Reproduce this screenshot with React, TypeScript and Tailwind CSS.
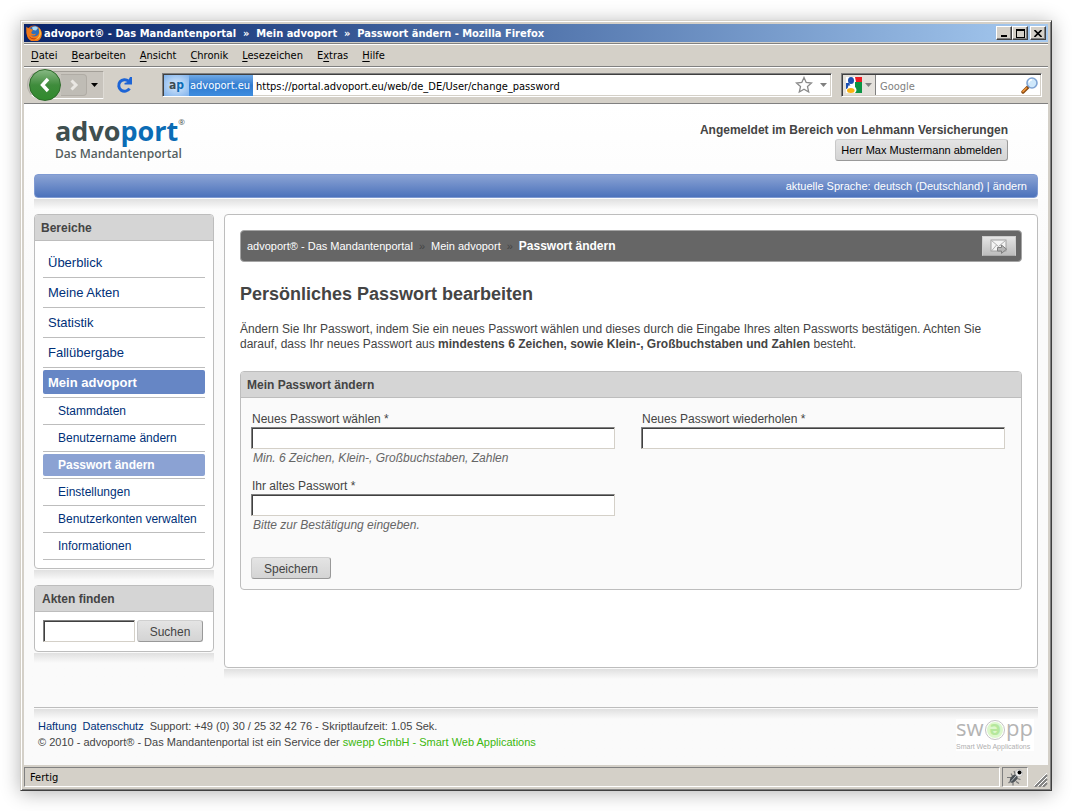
import React from 'react';

const menuItems = [
  { before: '', key: 'D', after: 'atei' },
  { before: '', key: 'B', after: 'earbeiten' },
  { before: '', key: 'A', after: 'nsicht' },
  { before: '', key: 'C', after: 'hronik' },
  { before: '', key: 'L', after: 'esezeichen' },
  { before: 'E', key: 'x', after: 'tras' },
  { before: '', key: 'H', after: 'ilfe' }
];

const areas = ['Überblick', 'Meine Akten', 'Statistik', 'Fallübergabe', 'Mein advoport'];

const subAreas = [
  'Stammdaten',
  'Benutzername ändern',
  'Passwort ändern',
  'Einstellungen',
  'Benutzerkonten verwalten',
  'Informationen'
];

const FirefoxIcon: React.FC = () => (
  <svg width="16" height="16" viewBox="0 0 16 16" className="shrink-0">
    <circle cx="8" cy="8" r="7.500" fill="#e0560f" />
    <circle cx="8.500" cy="6.500" r="5.500" fill="#2f6fb8" />
    <path d="M6 2.500c2-1.500 5-1 6 .5L10 5.500 7 5z" fill="#a9d8f4" />
    <path d="M.5 1.500C1.500 3 2.500 3 4 3.500c1 .5 2 1 3 1L6 6.500c-1 .5-1 2 .5 2.500s2-.5 3.500-.3c-1 2-3.500 2.300-5 1.300 1.500 2.500 7 2 8-2 .3-2-.2-4-1-5.500 2.500 1 3.800 3.500 3.800 6A7.400 7.400 0 0 1 1 10C.2 7 0 4 .5 1.500z" fill="#f07a1a" />
    <path d="M12.500 3c1.800 1.500 2.700 4 2.300 6.500-.6 3-3 5-6 5.300 3-1.300 4.700-3.300 4.800-6.300 0-2-.4-4-1.100-5.500z" fill="#fdc944" />
    <path d="M3 11c2 2.500 5 3 7.500 2-2 2.200-6 1.500-7.500-2z" fill="#b83208" />
  </svg>
);

const ReloadIcon: React.FC = () => (
  <svg width="18" height="18" viewBox="0 0 18 18">
    <path d="M13.500 5.200A5.800 5.800 0 1 0 14.500 12.500" fill="none" stroke="#1c64d6" strokeWidth="3" />
    <path d="M17 1v7.500H9.500V7l3-1 2.500-5z" fill="#1c64d6" />
  </svg>
);

const GoogleIcon: React.FC = () => (
  <svg width="16" height="16" viewBox="0 0 16 16">
    <rect width="16" height="16" fill="#fff" />
    <path d="M9 0h7v5h-6z" fill="#ee1c23" />
    <path d="M9 5h7v11H9c2-2 2-4 0-6z" fill="#0b9444" />
    <path d="M0 6h3l2 4-5 2z" fill="#1c4fb0" />
    <ellipse cx="5" cy="3.500" rx="3" ry="3.500" fill="#1c4fb0" />
    <path d="M2.500 8.500h4.500c2 .8 3 2.500 2 4.500H1z" fill="#fff" />
    <ellipse cx="4.800" cy="13.500" rx="3.800" ry="2.500" fill="#f9b310" />
  </svg>
);

const MagnifierIcon: React.FC = () => (
  <svg width="18" height="17" viewBox="0 0 18 17">
    <path d="M7.500 9.500 2 15" stroke="#8a4a10" strokeWidth="3.400" strokeLinecap="round" />
    <path d="M5.500 11 2 14.400" stroke="#f0963c" strokeWidth="1.600" strokeLinecap="round" />
    <circle cx="11" cy="6" r="5" fill="#cfe8fb" stroke="#7fa4d4" strokeWidth="1.600" />
    <path d="M8 5.500a3 3 0 0 1 3-2.700" stroke="#fff" strokeWidth="1.500" fill="none" />
  </svg>
);

const MailIcon: React.FC = () => (
  <svg width="18" height="15" viewBox="0 0 18 15">
    <rect x="1" y="1" width="15" height="11" fill="#f4f4f4" stroke="#a0a0a0" />
    <path d="m1.500 1.500 7 6 7-6M1.500 12l5-6M15.500 12l-5-6" fill="none" stroke="#b0b0b0" />
    <path d="M7.500 8.500h4V6l5 4.200-5 4.200V12h-4z" fill="#b5b5b5" stroke="#808080" />
  </svg>
);

const BugIcon: React.FC = () => (
  <svg width="16" height="17" viewBox="0 0 16 17">
    <path d="M0 8.500h4M1.500 14l3-2.500M6 16.500V13M4 4.500 6 8M9 12.500l3 2M10 9.500l3.500 1M7 2l1.500 4" stroke="#777" strokeWidth="1.200" />
    <ellipse cx="6.800" cy="9.500" rx="3" ry="5" transform="rotate(42 6.800 9.500)" fill="#4d5358" />
    <path d="m4 12.500 5-5.500" stroke="#b9c0c5" />
    <circle cx="12" cy="4" r="3.600" fill="#f2f2f2" stroke="#aaa" strokeWidth=".6" />
    <circle cx="12.500" cy="3.500" r="2" fill="#000" />
  </svg>
);

const SweppLogo: React.FC = () => (
  <svg width="78" height="32" viewBox="0 0 78 32" className="bg-white font-['Open_Sans',sans-serif]">
    <text x="0" y="17" fontSize="22" fill="#b4b4b4">sw</text>
    <circle cx="39" cy="11" r="9.500" fill="#fff" stroke="#c4c4c4" />
    <circle cx="39" cy="11" r="8" fill="#dcf7cc" />
    <text x="39" y="16" fontSize="19" fontWeight="700" textAnchor="middle" fill="#b5e79c">ə</text>
    <text x="50" y="17" fontSize="22" fill="#b4b4b4">pp</text>
    <text x="0" y="30" fontSize="7" fill="#b0b0b0" className="font-['Liberation_Sans',sans-serif]">Smart Web Applications</text>
  </svg>
);

const Caret: React.FC<{ className?: string }> = ({ className = 'text-black' }) => (
  <svg width="7" height="4" viewBox="0 0 7 4" className={className}>
    <path d="M0 0h7L3.500 4z" fill="currentColor" />
  </svg>
);

const frameButton =
  'flex h-[14px] w-4 items-center justify-center border border-t-white border-l-white border-r-[#404040] border-b-[#404040] bg-[#d4d0c8] shadow-[inset_-1px_-1px_0_#808080]';

const sunken =
  'border border-t-[#808080] border-l-[#808080] border-r-white border-b-white shadow-[inset_1px_1px_0_#404040,inset_-1px_-1px_0_#d4d0c8]';

const pageInput =
  'h-[22px] border border-t-[#808080] border-l-[#808080] border-r-[#d4d0c8] border-b-[#d4d0c8] bg-white px-1 shadow-[inset_1px_1px_0_#404040] outline-none';

const pageButton =
  'h-[22px] rounded-[3px] border border-t-[#d0d0d0] border-l-[#c8c8c8] border-r-[#999] border-b-[#999] bg-linear-to-b from-[#e4e4e4] to-[#d4d4d4]';

const TitleBar: React.FC = () => (
  <div className="flex h-[18px] items-center bg-linear-to-r from-[#0a246a] to-[#a6caf0] pr-0.5 pl-0.5">
    <FirefoxIcon />
    <span className="ml-0.5 flex-1 whitespace-pre text-[11px] leading-none font-bold text-white">
      {'advoport® - Das Mandantenportal  »  Mein advoport  »  Passwort ändern - Mozilla Firefox'}
    </span>
    <button aria-label="Minimieren" className={frameButton}>
      <svg width="8" height="8" viewBox="0 0 8 8"><path d="M1 6h6v2H1z" /></svg>
    </button>
    <button aria-label="Maximieren" className={frameButton}>
      <svg width="9" height="9" viewBox="0 0 9 9"><path d="M0 0h9v9H0zM1 2v6h7V2z" fillRule="evenodd" /></svg>
    </button>
    <button aria-label="Schließen" className={`ml-0.5 ${frameButton}`}>
      <svg width="8" height="7" viewBox="0 0 8 7"><path d="m.5 0 7 7M7.500 0l-7 7" stroke="#000" strokeWidth="1.600" /></svg>
    </button>
  </div>
);

const MenuBar: React.FC = () => (
  <nav className="mt-px flex h-[24px] items-center gap-[14px] border-t border-b border-[#808080] pt-0.5 pl-[7px] text-[11px] shadow-[inset_0_1px_0_#fff,0_1px_0_#fff]">
    {menuItems.map((item) => (
      <button key={item.key}>
        {item.before}
        <span className="underline underline-offset-2">{item.key}</span>
        {item.after}
      </button>
    ))}
  </nav>
);

const Toolbar: React.FC = () => (
  <div className="flex h-[37px] items-center border-b border-[#808080] pr-1.5 pl-[3px] text-[11px]">
    <div className="flex h-7 w-[77px] shrink-0 items-center rounded-l-full rounded-r-xl border border-t-[#a39f98] border-l-[#b5b1aa] border-r-[#dedbd5] border-b-white bg-[#c8c4bd]">
      <button
        aria-label="Zurück"
        className="-my-1 ml-px flex size-8 shrink-0 items-center justify-center rounded-full border border-[#2d6b2a] bg-linear-to-b from-[#86b883] via-[#3f8c3c] to-[#2f8a2c]"
      >
        <svg width="12" height="16" viewBox="0 0 12 16"><path d="M9 2 3.500 8 9 14" fill="none" stroke="#fff" strokeWidth="3.400" /></svg>
      </button>
      <button aria-label="Vor" className="flex h-[22px] w-[26px] items-center justify-center rounded-r border border-l-0 border-[#b0aca5] bg-[#bfbcb5]">
        <svg width="10" height="12" viewBox="0 0 10 12"><path d="m2.500 1.500 4.500 4.500-4.500 4.500" fill="none" stroke="#e9e7e3" strokeWidth="3" /></svg>
      </button>
      <button aria-label="Verlauf" className="ml-1">
        <Caret />
      </button>
    </div>
    <button aria-label="Neu laden" className="ml-[11px]">
      <ReloadIcon />
    </button>
    <div className={`ml-[29px] flex h-6 flex-1 items-center bg-white p-px ${sunken}`}>
      <button className="flex h-[21px] shrink-0 items-center bg-linear-to-b from-[#6fa9e6] via-[#2f7bd0] to-[#3f8ddf] text-white">
        <span className="flex h-full w-[25px] items-center justify-center bg-radial from-[#dcebfb] to-[#7fb2ec] text-[12px] font-bold text-[#3f4b4f]">
          a<span className="text-[#0b6cb5]">p</span>
        </span>
        <span className="pt-0.5 pr-[3px] pl-px">advoport.eu</span>
      </button>
      <input aria-label="Adresse" className="h-5 min-w-0 flex-1 px-[3px] pt-0.5 text-black outline-none" defaultValue="https://portal.advoport.eu/web/de_DE/User/change_password" />
      <button aria-label="Lesezeichen hinzufügen" className="mr-[7px]">
        <svg width="18" height="18" viewBox="0 0 18 18">
          <path d="m9 1.500 2.200 5 5.300.5-4 3.600 1.200 5.400L9 13.200 4.300 16l1.200-5.400-4-3.600 5.300-.5z" fill="#fff" stroke="#8a8a8a" strokeWidth="1.300" />
        </svg>
      </button>
      <button aria-label="Adressverlauf" className="mr-[3px]">
        <Caret className="text-[#808080]" />
      </button>
    </div>
    <div className={`ml-[9px] flex h-6 w-[201px] shrink-0 items-center bg-white p-px ${sunken}`}>
      <button aria-label="Suchmaschine" className="flex h-full w-[33px] items-center gap-[3px] border-r border-[#808080] bg-[#e4e1dc] pl-[3px]">
        <GoogleIcon />
        <Caret className="text-[#808080]" />
      </button>
      <input aria-label="Suche" className="h-5 min-w-0 flex-1 px-1 pt-0.5 outline-none placeholder:text-[#808080]" placeholder="Google" />
      <button aria-label="Suchen" className="mr-px">
        <MagnifierIcon />
      </button>
    </div>
  </div>
);

const Fade: React.FC = () => <div className="mt-px h-2.5 bg-linear-to-b from-[#e0e0e0] to-[#fafafa]" />;

const Sidebar: React.FC = () => (
  <aside className="w-[180px] shrink-0">
    <section className="rounded-[4px] border border-[#bdbdbd] bg-white">
      <h2 className="h-[26px] rounded-t-[3px] border-b border-[#bdbdbd] bg-[#d5d5d5] pl-1.5 text-[12px] leading-[26px] font-bold">Bereiche</h2>
      <ul className="px-2 pt-[7px] pb-2 text-[#003078]">
        {areas.map((name) => {
          const active = name === 'Mein advoport';
          return (
            <li key={name} className="h-[30px] border-b border-[#bdbdbd] pt-0.5 text-[13px]">
              <a
                href="#"
                className={`block h-6 rounded-[2px] pl-[5px] leading-[26px] ${active ? 'bg-[#6686c5] font-bold text-white' : ''}`}
              >
                {name}
              </a>
            </li>
          );
        })}
        {subAreas.map((name) => {
          const active = name === 'Passwort ändern';
          return (
            <li key={name} className="h-[27px] border-b border-[#bdbdbd] pt-0.5 text-[12px]">
              <a
                href="#"
                className={`block h-[22px] rounded-[2px] pl-[15px] leading-[22px] whitespace-nowrap ${active ? 'bg-[#8ba2d3] font-bold text-white' : ''}`}
              >
                {name}
              </a>
            </li>
          );
        })}
      </ul>
    </section>
    <Fade />
    <section className="mt-[5px] rounded-[4px] border border-[#bdbdbd] bg-white">
      <h2 className="h-[26px] rounded-t-[3px] border-b border-[#bdbdbd] bg-[#d5d5d5] pl-[7px] text-[12px] leading-[26px] font-bold">
        <label htmlFor="find">Akten finden</label>
      </h2>
      <form className="flex gap-0.5 px-2 pt-2 pb-[9px]" onSubmit={(e) => e.preventDefault()}>
        <input id="find" className={`w-[92px] ${pageInput}`} />
        <button className={`w-[66px] pt-px text-[12px] ${pageButton}`}>Suchen</button>
      </form>
    </section>
    <Fade />
  </aside>
);

const Field: React.FC<{ id: string; label: string; hint?: string }> = ({ id, label, hint }) => (
  <div className="flex h-[67px] flex-col pr-4 pl-2.5">
    <label htmlFor={id} className="h-[17px] pl-px leading-[19px]">{label}</label>
    <input id={id} type="password" className={pageInput} />
    {hint && <p className="pt-px pl-0.5 leading-4 text-[#666] italic">{hint}</p>}
  </div>
);

const Content: React.FC = () => (
  <main className="min-w-0 flex-1">
    <div className="rounded-[4px] border border-[#bdbdbd] bg-white px-[15px] pt-[15px] pb-[77px]">
      <div className="flex h-8 items-center rounded-[4px] border border-[#a5a5a5] bg-[#666] pr-[5px] pl-1.5 text-[11px] text-white">
        <a href="#">advoport® - Das Mandantenportal</a>
        <span className="mx-1.5 text-[#444]">»</span>
        <a href="#">Mein advoport</a>
        <span className="mx-1.5 text-[#444]">»</span>
        <strong className="flex-1 text-[12px]">Passwort ändern</strong>
        <button aria-label="Nachricht senden" className="flex h-5 w-[34px] items-center justify-center border border-[#ccc] border-b-[#aaa] bg-linear-to-b from-[#e4e4e4] to-[#bdbdbd]">
          <MailIcon />
        </button>
      </div>
      <h1 className="mt-5 text-[18px] leading-6 font-bold">Persönliches Passwort bearbeiten</h1>
      <p className="mt-4 pr-3 text-[12px] leading-[15px]">
        Ändern Sie Ihr Passwort, indem Sie ein neues Passwort wählen und dieses durch die Eingabe Ihres alten Passworts bestätigen. Achten Sie
        darauf, dass Ihr neues Passwort aus <strong>mindestens 6 Zeichen, sowie Klein-, Großbuchstaben und Zahlen</strong> besteht.
      </p>
      <form className="mt-[19px] rounded-[4px] border border-[#bdbdbd] bg-[#fafafa] text-[12px]" onSubmit={(e) => e.preventDefault()}>
        <h2 className="h-[26px] rounded-t-[3px] border-b border-[#bdbdbd] bg-[#d5d5d5] pl-1.5 leading-[26px] font-bold">Mein Passwort ändern</h2>
        <div className="grid grid-cols-2 pt-3">
          <Field id="new-password" label="Neues Passwort wählen *" hint="Min. 6 Zeichen, Klein-, Großbuchstaben, Zahlen" />
          <Field id="repeat-password" label="Neues Passwort wiederholen *" />
          <Field id="old-password" label="Ihr altes Passwort *" hint="Bitte zur Bestätigung eingeben." />
        </div>
        <button className={`mt-[13px] mb-2.5 ml-2.5 block w-20 pt-px ${pageButton}`}>Speichern</button>
      </form>
    </div>
    <Fade />
  </main>
);

const App: React.FC = () => (
  <div className="flex min-h-screen bg-white p-5 font-['DejaVu_Sans_Condensed','DejaVu_Sans',sans-serif] text-black">
    <div className="flex min-w-0 flex-1 flex-col border border-t-[#d4d0c8] border-l-[#d4d0c8] border-r-[#404040] border-b-[#404040] bg-[#d4d0c8] p-[3px] shadow-[inset_1px_1px_0_#fff,inset_-1px_-1px_0_#808080,0_2px_18px_rgba(0,0,0,0.3)]">
      <TitleBar />
      <MenuBar />
      <Toolbar />
      <div className="flex flex-1 flex-col bg-[#fafafa] bg-linear-to-b from-white to-[#fafafa] to-25% px-2.5 font-['Liberation_Sans',Arial,sans-serif] text-[#444]">
        <header className="flex h-[70px] justify-between pr-[30px] pl-[21px]">
          <div className="pt-3 font-['Open_Sans',sans-serif]">
            <a href="#" className="flex items-start text-[27px] leading-[30px] font-bold text-[#3f4f4f]">
              advo<span className="text-[#0b6cb5]">port</span>
              <span className="text-[8px] leading-3 font-normal">®</span>
            </a>
            <p className="text-[12px] leading-4 font-semibold text-[#555f5f]">Das Mandantenportal</p>
          </div>
          <div className="flex flex-col items-end pt-[18px]">
            <p className="text-[12px] leading-4 font-bold">Angemeldet im Bereich von Lehmann Versicherungen</p>
            <button className={`mt-px px-[5px] text-[11px] text-black ${pageButton}`}>Herr Max Mustermann abmelden</button>
          </div>
        </header>
        <div className="h-6 rounded-[4px] border border-[#7f9ad2] bg-linear-to-b from-[#8ba3d4] to-[#4c72bb] pr-2.5 text-right text-[11px] leading-[22px] text-white">
          aktuelle Sprache: deutsch (Deutschland) | <a href="#">ändern</a>
        </div>
        <div className="mt-px h-2.5 bg-linear-to-b from-[#e0e0e0] to-[#fbfbfb]" />
        <div className="mt-[5px] flex gap-2.5">
          <Sidebar />
          <Content />
        </div>
        <footer className="mt-7 flex-1 border-t border-[#bdbdbd]">
          <Fade />
          <div className="flex justify-between pr-1 pl-1 text-[11px]">
            <div className="leading-[15px]">
              <p>
                <a href="#" className="mr-1.5 text-[#003078]">Haftung</a>
                <a href="#" className="mr-1.5 text-[#003078]">Datenschutz</a>
                Support: +49 (0) 30 / 25 32 42 76 - Skriptlaufzeit: 1.05 Sek.
              </p>
              <p className="mt-px">
                © 2010 - advoport® - Das Mandantenportal ist ein Service der{' '}
                <a href="#" className="text-[#3cb80f]">swepp GmbH - Smart Web Applications</a>
              </p>
            </div>
            <SweppLogo />
          </div>
        </footer>
      </div>
      <div className="flex h-[22px] items-stretch gap-0.5 pt-0.5 text-[11px]">
        <div className="flex-1 border border-t-[#808080] border-l-[#808080] border-r-white border-b-white pl-[5px] leading-5">Fertig</div>
        <button aria-label="Firebug" className="flex w-[26px] items-center justify-center border border-t-[#808080] border-l-[#808080] border-r-white border-b-white">
          <BugIcon />
        </button>
        <svg width="18" height="20" viewBox="0 0 18 20">
          <path d="m5 20 12-12M9 20l8-8M13 20l4-4" stroke="#808080" strokeWidth="2" />
          <path d="m4 19 13-13M8 19l9-9M12 19l5-5" stroke="#fff" />
        </svg>
      </div>
    </div>
  </div>
);

export default App;
